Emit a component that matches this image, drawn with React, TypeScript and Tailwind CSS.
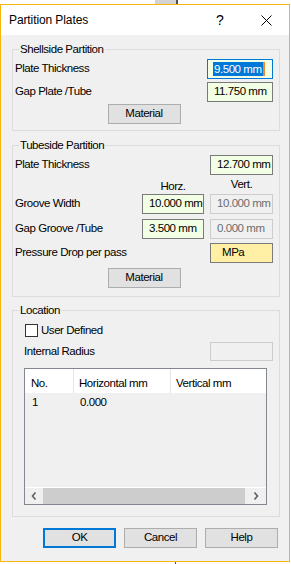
import React from 'react';

// Partition Plates dialog (Windows 10 style)

type Kind = 'green' | 'focus' | 'disabled' | 'yellow';

const Field = ({ value, kind, w, h = 20 }: { value?: string; kind: Kind; w: string; h?: number }) => {
  const base = 'flex items-center shrink-0 whitespace-nowrap overflow-hidden ' + w + (h === 19 ? ' h-[19px]' : ' h-[20px]');
  if (kind === 'focus') {
    return (
      <div className={base + ' border border-[#0078d7] bg-[#f2ffe4] pl-[5px]'}>
        <span className="bg-[#0078d7] text-white leading-[14px] px-[1px]">{value}</span>
        <span className="w-[2px] h-[14px] bg-[#f08a24] shrink-0" />
      </div>
    );
  }
  if (kind === 'disabled') {
    return <div className={base + ' border border-[#cccccc] bg-[#f0f0f0] pl-[6px] text-[#6d6d6d]'}>{value}</div>;
  }
  if (kind === 'yellow') {
    return <div className={base + ' border border-[#7a7a7a] bg-[#fff0a5] pl-[11px]'}>{value}</div>;
  }
  return <div className={base + ' border border-[#7a7a7a] bg-[#f2ffe4] pl-[6px]'}>{value}</div>;
};

const Group = ({ title, className, children }: { title: string; className: string; children: React.ReactNode }) => (
  <div className={'relative border border-[#dcdcdc] ' + className}>
    <span className="absolute top-[-9px] left-[6px] bg-[#f0f0f0] px-[1px] leading-[16px] whitespace-nowrap">{title}</span>
    {children}
  </div>
);

const Btn = ({ label, def }: { label: string; def?: boolean }) => (
  <div
    className={
      'w-[73px] h-[20px] flex items-center justify-center bg-[#e1e1e1] shrink-0 ' +
      (def ? 'border-2 border-[#0078d7]' : 'border border-[#adadad]')
    }
  >
    {label}
  </div>
);

const Chevron = ({ right }: { right?: boolean }) => (
  <svg width="6" height="8" viewBox="0 0 6 8">
    <polyline
      points={right ? '1.5,0.5 4.5,4 1.5,7.5' : '4.5,0.5 1.5,4 4.5,7.5'}
      fill="none"
      stroke="#606060"
      strokeWidth="1.6"
    />
  </svg>
);

export default function App() {
  return (
    <div className="w-[291px] h-[564px] bg-white overflow-hidden text-[11.5px] tracking-[-0.45px] text-black font-['Liberation_Sans',Arial,sans-serif]">
      <div className="h-[4px] flex">
        <div className="w-[155px] bg-white" />
        <div className="w-[21px] bg-[#d4d4d4]" />
        <div className="w-[2px] bg-[#505050]" />
        <div className="flex-1 bg-white" />
      </div>

      <div className="w-[290px] h-[558px] border border-[#f5b70f] bg-[#f0f0f0] flex flex-col">
        <div className="h-[30px] bg-white flex items-center pl-[8px] shrink-0">
          <span className="text-[12px] tracking-[-0.1px]">Partition Plates</span>
          <div className="flex-1" />
          <div className="w-[46px] flex justify-center text-[14px] leading-none tracking-normal">?</div>
          <div className="w-[46px] flex justify-center">
            <svg width="11" height="11" viewBox="0 0 11 11">
              <path d="M0.5 0.5 L10.5 10.5 M10.5 0.5 L0.5 10.5" stroke="#000" strokeWidth="1" />
            </svg>
          </div>
        </div>

        <div className="pl-[11px] pr-[9px] flex flex-col">
          <Group title="Shellside Partition" className="mt-[14px] pt-[9px] pb-[6px] pl-[2px] pr-[6px] flex flex-col">
            <div className="flex items-center h-[20px]">
              <span>Plate Thickness</span>
              <div className="ml-auto">
                <Field kind="focus" value="9.500 mm" w="w-[66px]" />
              </div>
            </div>
            <div className="flex items-center h-[20px] mt-[3px]">
              <span>Gap Plate /Tube</span>
              <div className="ml-auto">
                <Field kind="green" value="11.750 mm" w="w-[66px]" />
              </div>
            </div>
            <div className="flex justify-center mt-[2px]">
              <Btn label="Material" />
            </div>
          </Group>

          <Group title="Tubeside Partition" className="mt-[14px] pt-[9px] pb-[8px] pl-[2px] pr-[6px] flex flex-col">
            <div className="flex items-center h-[20px]">
              <span>Plate Thickness</span>
              <div className="ml-auto">
                <Field kind="green" value="12.700 mm" w="w-[63px]" />
              </div>
            </div>
            <div className="flex h-[19px] justify-end">
              <span className="w-[62px] text-center leading-[14px] mt-[4px]">Horz.</span>
              <span className="w-[6px]" />
              <span className="w-[63px] text-center leading-[14px] mt-[2px]">Vert.</span>
            </div>
            <div className="flex items-center h-[20px]">
              <span>Groove Width</span>
              <div className="ml-auto flex gap-[6px]">
                <Field kind="green" value="10.000 mm" w="w-[62px]" />
                <Field kind="disabled" value="10.000 mm" w="w-[63px]" />
              </div>
            </div>
            <div className="flex items-center h-[20px] mt-[5px]">
              <span>Gap Groove /Tube</span>
              <div className="ml-auto flex gap-[6px]">
                <Field kind="green" value="3.500 mm" w="w-[62px]" />
                <Field kind="disabled" value="0.000 mm" w="w-[63px]" />
              </div>
            </div>
            <div className="flex items-center h-[20px] mt-[4px]">
              <span>Pressure Drop per pass</span>
              <div className="ml-auto">
                <Field kind="yellow" value="MPa" w="w-[63px]" />
              </div>
            </div>
            <div className="flex justify-center mt-[5px]">
              <Btn label="Material" />
            </div>
          </Group>

          <Group title="Location" className="mt-[13px] pt-[13px] pb-[11px] pl-[11px] pr-[6px] flex flex-col">
            <div className="flex items-center h-[13px] ml-[1px]">
              <span className="w-[13px] h-[13px] border border-[#333333] bg-white" />
              <span className="ml-[3px]">User Defined</span>
            </div>
            <div className="flex items-center h-[19px] mt-[5px]">
              <span>Internal Radius</span>
              <div className="ml-auto">
                <Field kind="disabled" w="w-[63px]" h={19} />
              </div>
            </div>
            <div className="mt-[7px] w-[243px] h-[137px] border border-[#828790] bg-[#f0f0f0] flex flex-col">
              <div className="h-[24px] bg-white flex shrink-0">
                <div className="w-[49px] border-r border-[#e5e5e5] pl-[6px] pt-[6px]">No.</div>
                <div className="w-[97px] border-r border-[#e5e5e5] pl-[5px] pt-[6px]">Horizontal mm</div>
                <div className="flex-1 pl-[5px] pt-[6px]">Vertical mm</div>
              </div>
              <div className="h-[19px] flex items-center shrink-0">
                <div className="w-[49px] pl-[7px]">1</div>
                <div className="pl-[6px]">0.000</div>
              </div>
              <div className="flex-1" />
              <div className="h-[1px] bg-white shrink-0" />
              <div className="h-[16px] flex shrink-0">
                <div className="w-[18px] flex items-center justify-center">
                  <Chevron />
                </div>
                <div className="w-[202px] bg-[#cdcdcd]" />
                <div className="flex-1 flex items-center justify-center">
                  <Chevron right />
                </div>
              </div>
            </div>
          </Group>

          <div className="mt-[11px] flex justify-end gap-[8px] pr-[2px]">
            <Btn label="OK" def />
            <Btn label="Cancel" />
            <Btn label="Help" />
          </div>
        </div>
      </div>

      <div className="h-[2px] flex">
        <div className="w-[175px]" />
        <div className="w-[1px] bg-[#505050]" />
      </div>
    </div>
  );
}
